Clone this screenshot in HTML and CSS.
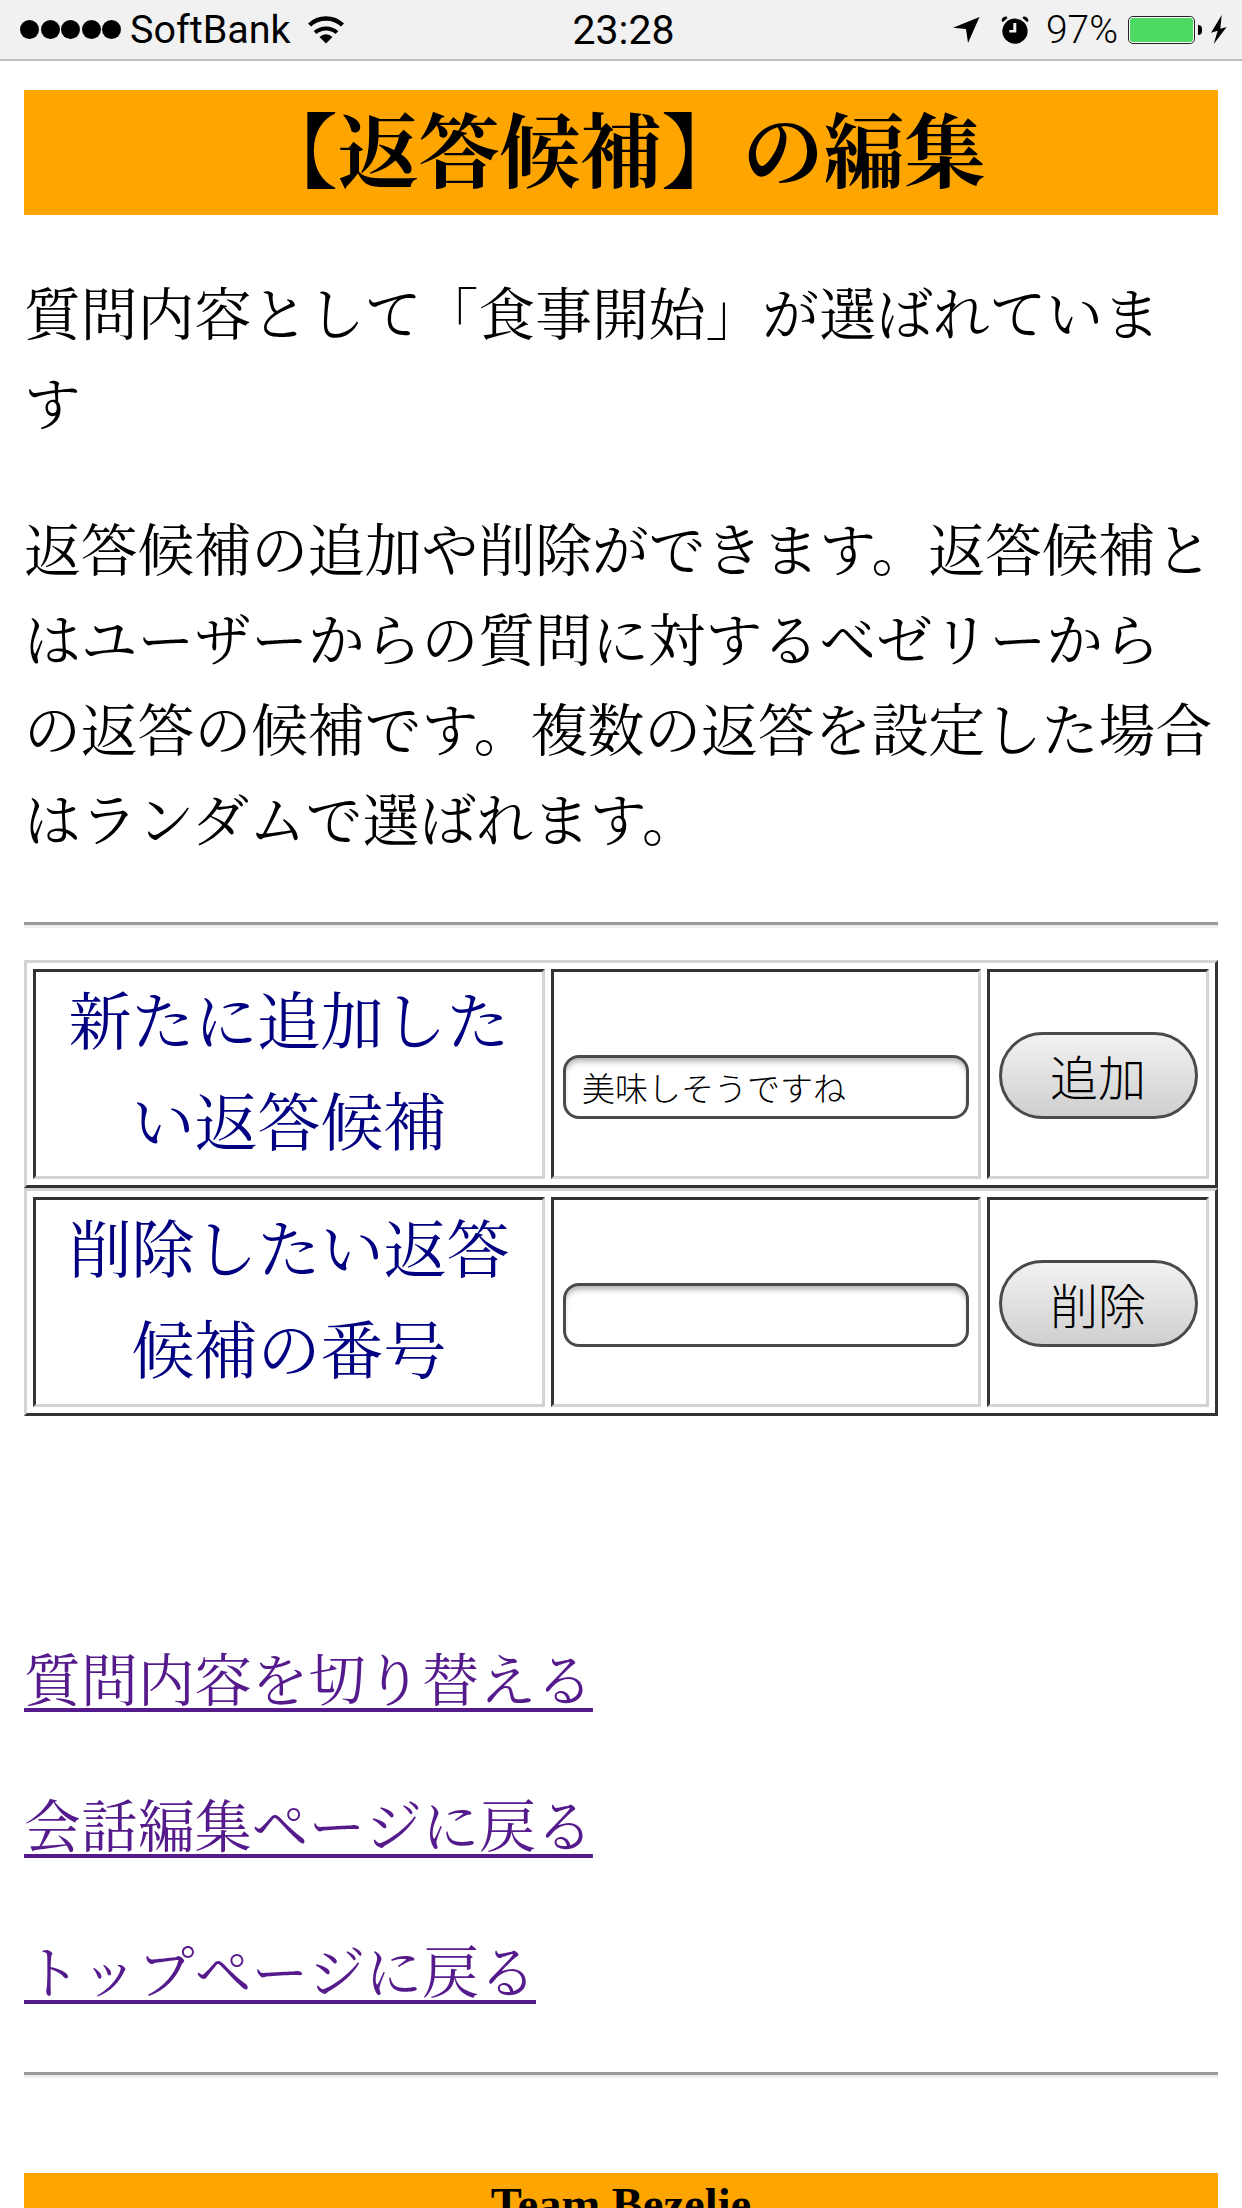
FILE: index.html
```html
<!DOCTYPE html>
<html lang="ja">
<head>
    <meta charset="UTF-8">
    <meta name="viewport" content="width=device-width, initial-scale=1.0">
    <title>返答候補の編集 - Team Bezelie</title>
    <link rel="stylesheet" href="styles.css">
</head>
<body>
    <div class="status-bar">
        <div class="status-left">
            <span class="signal"><i></i><i></i><i></i><i></i><i></i></span>
            <span class="carrier">SoftBank</span>
            <svg class="icon-wifi" width="38" height="28" viewBox="0 0 38 28">
                <path d="M12.5 21 A9 9 0 0 1 25.5 21 L19 27.5 Z"/>
                <path d="M8 16.5 A17 17 0 0 1 30 16.5" fill="none" stroke="#000" stroke-width="4"/>
                <path d="M2.5 9 A24 24 0 0 1 35.5 9" fill="none" stroke="#000" stroke-width="4.4"/>
            </svg>
        </div>
        <div class="status-time">23:28</div>
        <div class="status-right">
            <svg class="icon-arrow" width="27" height="26" viewBox="0 0 27 26">
                <path d="M26.5 0 L0 10.7 L13 12 L15 26 Z"/>
            </svg>
            <svg class="icon-alarm" width="28" height="28" viewBox="0 0 28 28">
                <circle cx="14" cy="15.2" r="12.6"/>
                <path d="M0.5 5 A5 5 0 0 1 5.5 0.5 L6.5 2 L2 6 Z"/>
                <path d="M27.5 5 A5 5 0 0 0 22.5 0.5 L21.5 2 L26 6 Z"/>
                <path d="M12.3 7 H15.3 V16.6 H8.3 V14 H12.3 Z" fill="#f1f1f1"/>
            </svg>
            <span class="battery-pct">97%</span>
            <span class="battery"><span class="battery-level"></span></span>
            <svg class="icon-bolt" width="16" height="29" viewBox="0 0 16 29">
                <path d="M10.7 0 L0 17.7 L6.7 15.7 L2.7 29 L15.7 12 L9.3 13.7 Z"/>
            </svg>
        </div>
    </div>

    <div class="page">
        <h1 class="title">【返答候補】の編集</h1>
        <p class="text">質問内容として「食事開始」が選ばれていま<br>す</p>
        <p class="text">返答候補の追加や削除ができます。返答候補と<br>はユーザーからの質問に対するベゼリーから<br>の返答の候補です。複数の返答を設定した場合<br>はランダムで選ばれます。</p>
        <hr class="rule rule-top">

        <table class="edit-table">
            <tr>
                <th class="cell-label">新たに追加した<br>い返答候補</th>
                <td class="cell-input"><input class="text-box" type="text" value="美味しそうですね"></td>
                <td class="cell-button"><button class="pill-button" type="button">追加</button></td>
            </tr>
        </table>
        <table class="edit-table">
            <tr>
                <th class="cell-label">削除したい返答<br>候補の番号</th>
                <td class="cell-input"><input class="text-box" type="text"></td>
                <td class="cell-button"><button class="pill-button" type="button">削除</button></td>
            </tr>
        </table>

        <ul class="links">
            <li><a href="#">質問内容を切り替える</a></li>
            <li><a href="#">会話編集ページに戻る</a></li>
            <li><a href="#">トップページに戻る</a></li>
        </ul>
        <hr class="rule rule-bottom">
        <div class="footer">Team Bezelie</div>
    </div>
</body>
</html>
```

FILE: styles.css
```css
html, body {
    margin: 0;
    height: 2208px;
    overflow: hidden;
    background-color: #fff;
}
body {
    font-family: "Liberation Serif", "Noto Serif CJK JP", "Noto Sans CJK JP", serif;
    color: #000;
}

/* status bar */
.status-bar {
    display: grid;
    grid-template-columns: 1fr auto 1fr;
    align-items: center;
    height: 59px;
    padding: 0 15px 0 20px;
    background-color: #f1f1f1;
    border-bottom: 2px solid #bdbdbd;
    font-family: Roboto, "Liberation Sans", sans-serif;
    font-size: 39.5px;
}
.status-bar svg {
    display: block;
}
.status-left, .status-right {
    display: flex;
    align-items: center;
}
.status-right {
    justify-content: flex-end;
}
.signal {
    display: flex;
    gap: 1.5px;
}
.signal i {
    width: 19px;
    height: 19px;
    border-radius: 50%;
    background-color: #000;
}
.carrier {
    margin-left: 9px;
}
.icon-wifi {
    margin-left: 16px;
}
.status-time {
    font-size: 41px;
}
.icon-alarm {
    margin-left: 21px;
}
.battery-pct {
    margin-left: 17px;
    font-size: 39px;
    font-weight: 300;
}
.battery {
    position: relative;
    display: block;
    width: 67px;
    height: 28px;
    margin-left: 10px;
    box-sizing: border-box;
    padding: 1px;
    background-color: #fff;
    border: 1.5px solid #222;
    border-radius: 5px;
}
.battery::after {
    content: "";
    position: absolute;
    top: 8px;
    right: -8px;
    width: 4px;
    height: 10px;
    background-color: #000;
    border-radius: 0 4px 4px 0;
}
.battery-level {
    display: block;
    height: 100%;
    background-color: #4cd964;
    border-radius: 3px;
}
.icon-bolt {
    margin-left: 16px;
}

/* page content */
.page {
    padding: 29px 24px 0;
}
.title {
    margin: 0;
    padding-top: 3px;
    background-color: #ffa500;
    font-size: 81px;
    font-weight: bold;
    line-height: 122px;
    text-align: center;
}
.text {
    margin: 56px 0;
    font-size: 56.8px;
    line-height: 90px;
    white-space: nowrap;
}
.rule {
    height: 0;
    margin: 0;
    border-style: solid;
    border-width: 3px 0;
    border-color: #999 #eee #eee #999;
}
.rule-top {
    margin-top: -1px;
    margin-bottom: 32px;
}
.rule-bottom {
    margin-top: 53px;
}

/* edit tables */
.edit-table {
    width: 1194px;
    table-layout: fixed;
    border-collapse: separate;
    border-spacing: 6px;
    border-style: solid;
    border-width: 3px;
    border-color: #d3d3d3 #333 #333 #d3d3d3;
}
.edit-table th, .edit-table td {
    box-sizing: border-box;
    padding: 1px;
    border-style: solid;
    border-width: 3px;
    border-color: #333 #d3d3d3 #d3d3d3 #333;
}
.cell-label {
    width: 512px;
    color: #000080;
    font-size: 63px;
    font-weight: normal;
    line-height: 101px;
    text-align: center;
}
.cell-input {
    width: 430px;
}
.cell-button {
    width: 222px;
    text-align: center;
}
.text-box {
    display: block;
    box-sizing: border-box;
    width: 406px;
    height: 64px;
    margin: 26px 0 0 8px;
    padding: 0 16px;
    background-color: #fff;
    border: 3px solid #4a4a4a;
    border-radius: 16px;
    box-shadow: inset 0 6px 6px -3px #aaa;
    color: #000;
    font-family: "Noto Sans CJK JP", sans-serif;
    font-size: 33px;
    font-weight: 300;
}
.pill-button {
    display: block;
    box-sizing: border-box;
    width: 199px;
    height: 87px;
    margin: 2px auto 0;
    padding: 0;
    background: linear-gradient(#f2f2f2, #cfcfcf);
    border: 3px solid #4a4a4a;
    border-radius: 44px;
    color: #000;
    font-family: "Noto Sans CJK JP", sans-serif;
    font-size: 48px;
    font-weight: 300;
}

/* links and footer */
.links {
    margin: 221px 0 0;
    padding: 0;
    list-style: none;
    font-size: 56.9px;
    font-kerning: none;
    line-height: 90px;
}
.links li + li {
    margin-top: 56px;
}
.links a {
    color: #551a8b;
    text-decoration-thickness: 4px;
    text-underline-offset: 7px;
}
.footer {
    margin-top: 95px;
    background-color: #ffa500;
    font-size: 46.5px;
    font-weight: bold;
    line-height: 64px;
    text-align: center;
}
```
